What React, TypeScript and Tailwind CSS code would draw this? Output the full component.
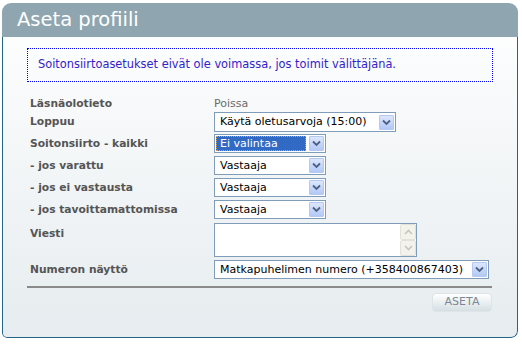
import React from "react";

const ArrowBtn = () => (
  <div className="flex h-[15px] w-[15px] shrink-0 items-center justify-center rounded-[1px] border border-[#b5c8f2] bg-gradient-to-b from-[#dce6fd] to-[#b3c8f7]">
    <svg width="9" height="7" viewBox="0 0 9 7">
      <path d="M1 1.5 L4.5 5 L8 1.5" fill="none" stroke="#4d6185" strokeWidth="1.8" />
    </svg>
  </div>
);

const Select = ({
  value,
  width,
  height = "h-[19px]",
  selected = false,
}: {
  value: string;
  width: string;
  height?: string;
  selected?: boolean;
}) => (
  <div className={`flex ${width} ${height} items-center border border-[#7f9db9] bg-white pl-[1px] pr-[1px]`}>
    {selected ? (
      <div className="mr-[3px] flex h-[15px] flex-1 items-center border border-dotted border-[#e0a040] bg-[#316ac5] px-[3px] text-white">
        {value}
      </div>
    ) : (
      <div className="flex-1 truncate pl-[4px] text-black">{value}</div>
    )}
    <ArrowBtn />
  </div>
);

const Row = ({ label, children, top = false }: { label: string; children: React.ReactNode; top?: boolean }) => (
  <div className={`flex leading-[14px] ${top ? "items-start" : "items-center"}`}>
    <div className={`w-[187px] shrink-0 pl-[3px] text-[10.7px] font-bold text-[#555555] ${top ? "pt-[4px]" : ""}`}>
      {label}
    </div>
    {children}
  </div>
);

export default function App() {
  return (
    <div
      className="h-[344px] w-[522px] bg-white pl-[2px] pt-[3px] text-[11px]"
      style={{ fontFamily: '"DejaVu Sans", Verdana, sans-serif' }}
    >
      <div className="flex h-[335px] w-[516px] flex-col overflow-hidden rounded-t-[9px] rounded-bl-[5px] rounded-br-[7px] bg-gradient-to-b from-white to-[#e6ecef]">
        {/* Header */}
        <div className="flex h-[34px] shrink-0 items-center bg-[#8fa6b0] pb-[1px] pl-[15px] text-[19.5px] text-white">
          Aseta profiili
        </div>

        {/* Body */}
        <div className="flex flex-1 flex-col rounded-b-[inherit] border-x border-b border-[#236585] px-[24px] pt-[11px]">
          <div className="flex h-[34px] items-center border border-dotted border-[#0000ee] pl-[10px] text-[11.4px] text-[#3322cc]">
            Soitonsiirtoasetukset eivät ole voimassa, jos toimit välittäjänä.
          </div>

          <div className="mt-[15px] flex flex-col">
            <Row label="Läsnäolotieto">
              <div className="text-[#6b6b6b]">Poissa</div>
            </Row>
            <div className="mt-[1px]">
              <Row label="Loppuu">
                <Select value="Käytä oletusarvoja (15:00)" width="w-[182px]" height="h-[20px]" />
              </Row>
            </div>
            <div className="mt-[2px]">
              <Row label="Soitonsiirto - kaikki">
                <Select value="Ei valintaa" width="w-[112px]" selected />
              </Row>
            </div>
            <div className="mt-[3px]">
              <Row label="- jos varattu">
                <Select value="Vastaaja" width="w-[112px]" />
              </Row>
            </div>
            <div className="mt-[3px]">
              <Row label="- jos ei vastausta">
                <Select value="Vastaaja" width="w-[112px]" />
              </Row>
            </div>
            <div className="mt-[3px]">
              <Row label="- jos tavoittamattomissa">
                <Select value="Vastaaja" width="w-[112px]" />
              </Row>
            </div>
            <div className="mt-[4px]">
              <Row label="Viesti" top>
                <div className="flex h-[34px] w-[203px] border border-[#7f9db9] bg-white">
                  <div className="flex-1" />
                  <div className="flex w-[16px] flex-col">
                    <div className="flex flex-1 items-center justify-center rounded-[2px] border border-[#e4e2d8] bg-[#f3f2ec]">
                      <svg width="9" height="6" viewBox="0 0 9 6">
                        <path d="M1 5 L4.5 1.5 L8 5" fill="none" stroke="#c8c6bc" strokeWidth="1.6" />
                      </svg>
                    </div>
                    <div className="flex flex-1 items-center justify-center rounded-[2px] border border-[#e4e2d8] bg-[#f3f2ec]">
                      <svg width="9" height="6" viewBox="0 0 9 6">
                        <path d="M1 1 L4.5 4.5 L8 1" fill="none" stroke="#c8c6bc" strokeWidth="1.6" />
                      </svg>
                    </div>
                  </div>
                </div>
              </Row>
            </div>
            <div className="mt-[3px]">
              <Row label="Numeron näyttö">
                <Select value="Matkapuhelimen numero (+358400867403)" width="w-[275px]" />
              </Row>
            </div>
          </div>

          <div className="mt-[7px] h-[2px] w-[465px] bg-[#8a8a8a]" />

          <div className="mt-[5px] flex justify-end pr-[1px]">
            <button className="flex h-[19px] w-[60px] items-center justify-center rounded-[4px] border border-[#dfe4e7] bg-gradient-to-b from-white to-[#d5dfe4] text-[11px] text-[#7b8893]">
              ASETA
            </button>
          </div>
        </div>
      </div>
    </div>
  );
}
